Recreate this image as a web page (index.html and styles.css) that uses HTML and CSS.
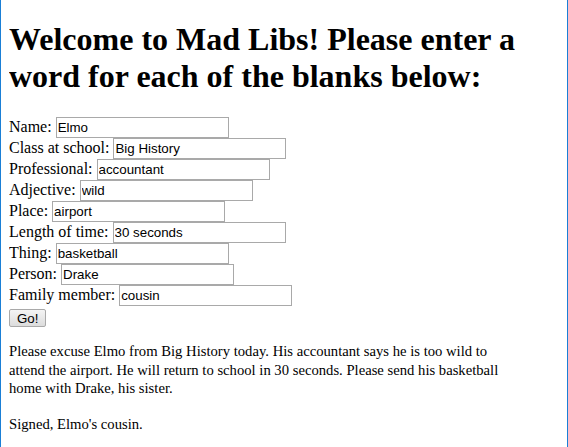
FILE: index.html
```html
<!DOCTYPE html>
<html lang="en">
<head>
<meta charset="utf-8">
<title>Mad Libs</title>
<link rel="stylesheet" href="styles.css">
</head>
<body>
<h1 class="title">Welcome to Mad Libs! Please enter a word for each of the blanks below:</h1>
<form class="libs">
Name: <input class="field" type="text" value="Elmo"><br>
Class at school: <input class="field" type="text" value="Big History"><br>
Professional: <input class="field" type="text" value="accountant"><br>
Adjective: <input class="field" type="text" value="wild"><br>
Place: <input class="field" type="text" value="airport"><br>
Length of time: <input class="field" type="text" value="30 seconds"><br>
Thing: <input class="field" type="text" value="basketball"><br>
Person: <input class="field" type="text" value="Drake"><br>
Family member: <input class="field" type="text" value="cousin"><br>
<button class="go" type="button">Go!</button>
</form>
<div class="story">
<p class="story-line">Please excuse Elmo from Big History today. His accountant says he is too wild to attend the airport. He will return to school in 30 seconds. Please send his basketball home with Drake, his sister.</p>
<p class="story-line">Signed, Elmo's cousin.</p>
</div>
</body>
</html>
```
FILE: styles.css
```css
html {
  height: 100%;
  box-sizing: border-box;
  border-left: 1px solid #1a7fd6;
  border-right: 1px solid #1a7fd6;
  background: #fff;
}
body {
  margin: 0 8px 8px;
  max-width: 516px;
  font-family: "Liberation Serif", "Times New Roman", serif;
  font-size: 16px;
  color: #000;
}
.title {
  font-size: 32px;
  font-weight: bold;
  margin: 21.44px 0;
}
.libs {
  margin: 0;
}
.field {
  box-sizing: border-box;
  width: 173px;
  height: 21px;
  border: 1px solid #a9a9a9;
  padding: 2px 1px;
  margin: 0;
  font-family: "Liberation Sans", Arial, sans-serif;
  font-size: 13.333px;
  color: #000;
  background: #fff;
}
.go {
  box-sizing: border-box;
  height: 18px;
  margin: 0;
  padding: 0 7px;
  vertical-align: -3px;
  border: 1px solid #a9a9a9;
  border-radius: 2px;
  background: linear-gradient(#f4f4f4, #dcdcdc);
  font-family: "Liberation Sans", Arial, sans-serif;
  font-size: 13.333px;
  color: #000;
}
.story {
  font-size: 14.67px;
  line-height: 18.5px;
}
.story-line {
  margin: 15px 0 17px;
}
```
